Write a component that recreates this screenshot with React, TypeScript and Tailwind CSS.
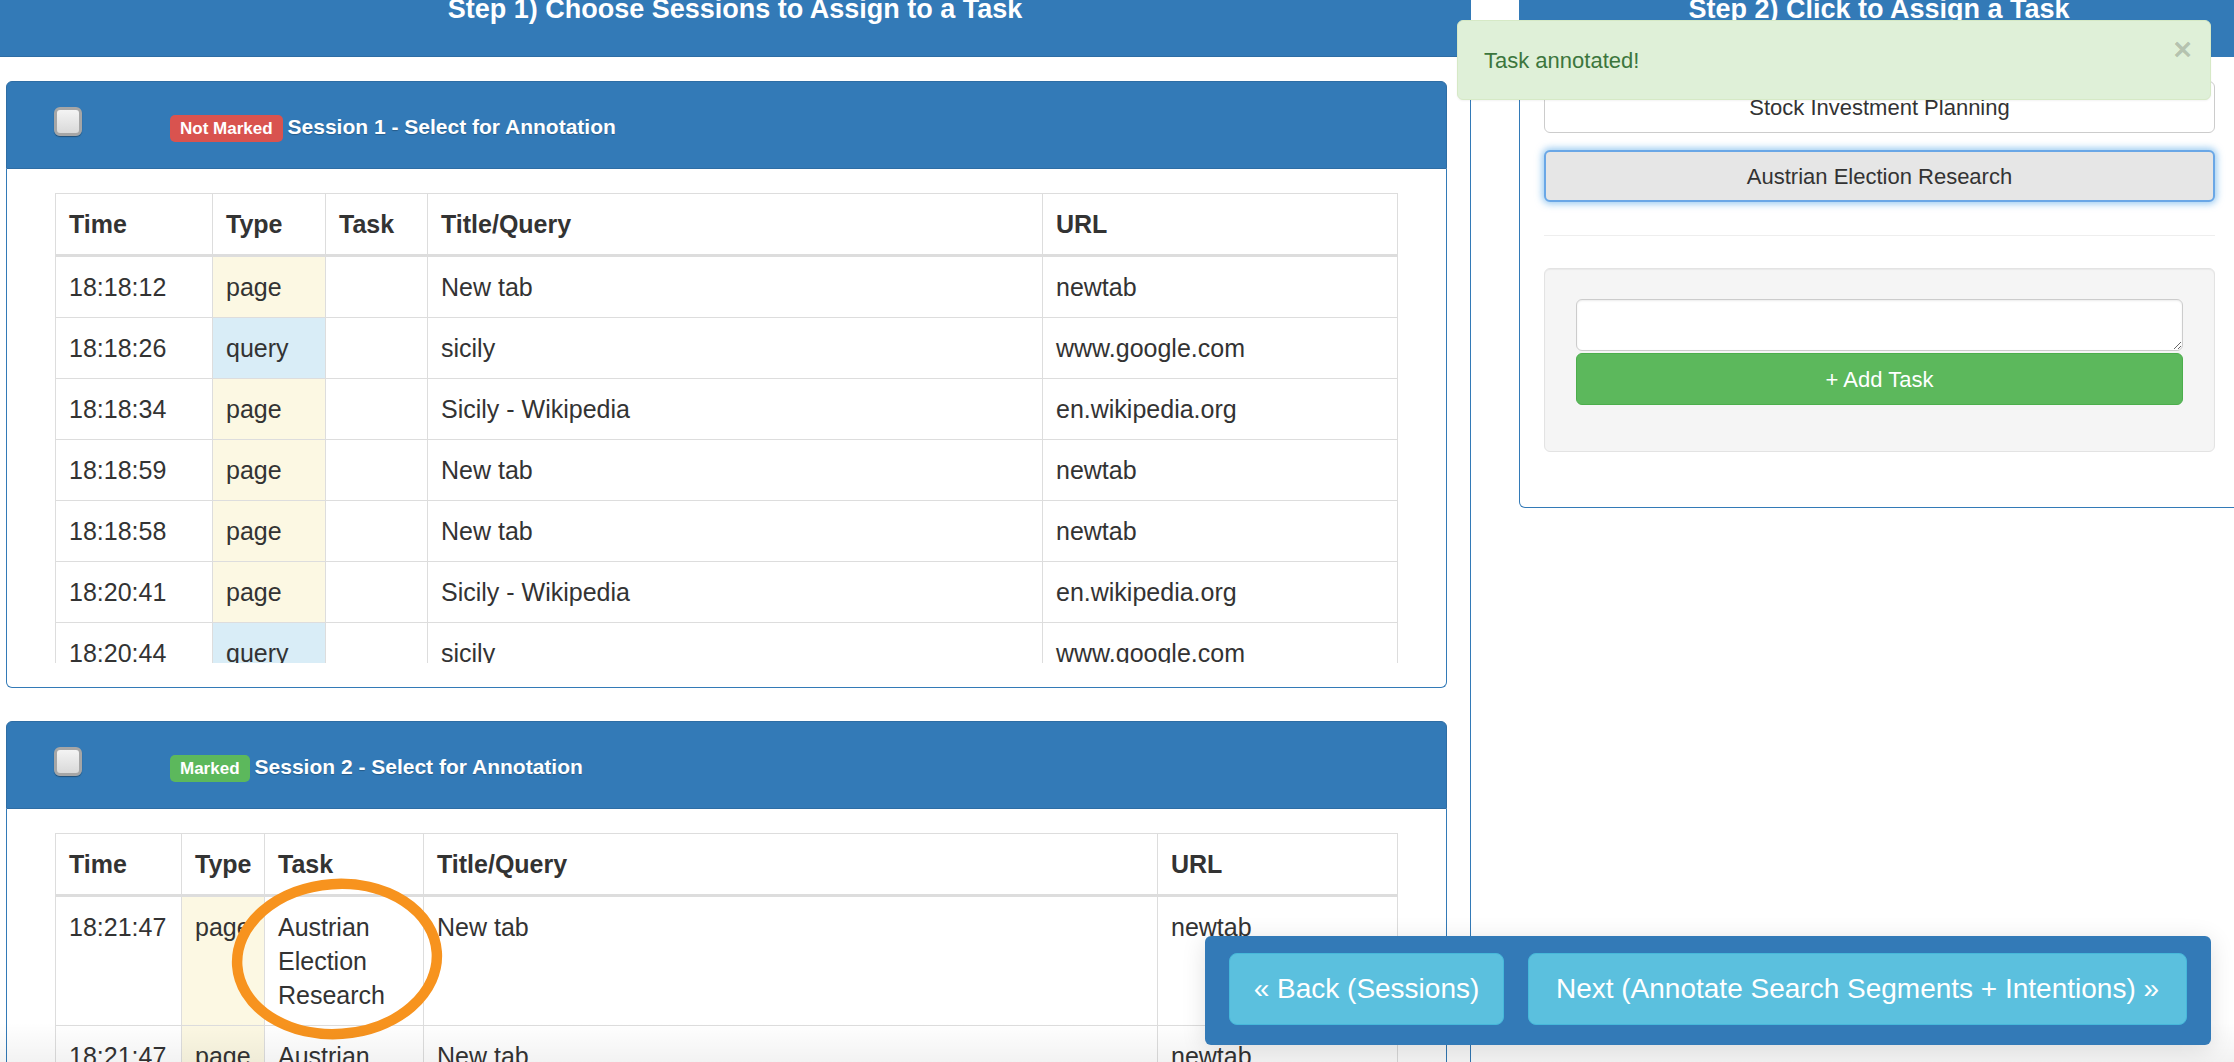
import React from 'react'

type Row = {
  time: string
  type: 'page' | 'query'
  task: string
  title: string
  url: string
}

const session1: Row[] = [
  { time: '18:18:12', type: 'page', task: '', title: 'New tab', url: 'newtab' },
  { time: '18:18:26', type: 'query', task: '', title: 'sicily', url: 'www.google.com' },
  { time: '18:18:34', type: 'page', task: '', title: 'Sicily - Wikipedia', url: 'en.wikipedia.org' },
  { time: '18:18:59', type: 'page', task: '', title: 'New tab', url: 'newtab' },
  { time: '18:18:58', type: 'page', task: '', title: 'New tab', url: 'newtab' },
  { time: '18:20:41', type: 'page', task: '', title: 'Sicily - Wikipedia', url: 'en.wikipedia.org' },
  { time: '18:20:44', type: 'query', task: '', title: 'sicily', url: 'www.google.com' },
  { time: '18:20:52', type: 'page', task: '', title: 'Sicily - Wikipedia', url: 'en.wikipedia.org' },
]

const session2: Row[] = [
  { time: '18:21:47', type: 'page', task: 'Austrian Election Research', title: 'New tab', url: 'newtab' },
  { time: '18:21:47', type: 'page', task: 'Austrian Election Research', title: 'New tab', url: 'newtab' },
]

const font = { fontFamily: '"Liberation Sans", Arial, Helvetica, sans-serif' }

function Checkbox() {
  return (
    <div className="w-[28px] h-[29px] shrink-0 rounded-[6px] border-[3px] border-[#a6a6a6] bg-linear-to-b from-[#f4f4f4] to-[#d9d9d9] shadow-[0_1px_1px_rgba(0,0,0,0.35)]" />
  )
}

function SessionPanel({
  marked,
  title,
  rows,
  cols,
  clip,
}: {
  marked: boolean
  title: string
  rows: Row[]
  cols: string[]
  clip: boolean
}) {
  return (
    <div className="w-[1441px]">
      {/* heading */}
      <div className="h-[88px] flex items-start bg-[#337ab7] border border-[#2e6da4] rounded-t-[6px]">
        <div className="ml-[47px] mt-[25px]">
          <Checkbox />
        </div>
        <div className="ml-[88px] mt-[33px] flex items-center h-[27px]">
          <span
            className={`h-[27px] px-[10px] flex items-center rounded-[5px] text-white font-bold text-[17px] ${
              marked ? 'bg-[#5cb85c]' : 'bg-[#d9534f]'
            }`}
          >
            {marked ? 'Marked' : 'Not Marked'}
          </span>
          <span className="ml-[5px] -mt-[5px] text-white font-bold text-[21px] leading-[27px] [text-shadow:0_1px_1px_rgba(0,0,0,0.25)]">
            {title}
          </span>
        </div>
      </div>

      {/* body */}
      <div className="border-x border-b border-[#337ab7] rounded-b-[6px] px-[48px] pt-[24px] pb-[24px]">
        <div className={clip ? 'h-[470px] overflow-hidden' : ''}>
          <table className="w-full table-fixed border-collapse text-[25px] leading-[34px] text-[#333]">
            <colgroup>
              {cols.map((c, i) => (
                <col key={i} className={c} />
              ))}
            </colgroup>
            <thead>
              <tr>
                {['Time', 'Type', 'Task', 'Title/Query', 'URL'].map((h) => (
                  <th
                    key={h}
                    className="text-left align-bottom font-bold px-[13px] py-[13px] border border-[#ddd] border-b-[3px]"
                  >
                    {h}
                  </th>
                ))}
              </tr>
            </thead>
            <tbody>
              {rows.map((r, i) => (
                <tr key={i}>
                  <td className="align-top px-[13px] py-[13px] border border-[#ddd]">{r.time}</td>
                  <td
                    className={`align-top px-[13px] py-[13px] border border-[#ddd] ${
                      r.type === 'page' ? 'bg-[#fcf8e3]' : 'bg-[#d9edf7]'
                    }`}
                  >
                    {r.type}
                  </td>
                  <td className="align-top px-[13px] py-[13px] border border-[#ddd]">{r.task}</td>
                  <td className="align-top px-[13px] py-[13px] border border-[#ddd]">{r.title}</td>
                  <td className="align-top px-[13px] py-[13px] border border-[#ddd]">{r.url}</td>
                </tr>
              ))}
            </tbody>
          </table>
        </div>
      </div>
    </div>
  )
}

export default function App() {
  return (
    <div className="relative w-[2234px] h-[1062px] overflow-hidden bg-white" style={font}>
      <div className="flex items-start">
        {/* Left column */}
        <div className="w-[1471px] shrink-0 border-r border-[#337ab7] h-[1062px]">
          <div className="h-[57px] bg-[#337ab7] border-b border-[#2e6da4] overflow-hidden text-center">
            <div className="-mt-[6px] text-white font-bold text-[27px] leading-[30px]">
              Step 1) Choose Sessions to Assign to a Task
            </div>
          </div>
          <div className="pl-[6px] pt-[24px] flex flex-col gap-[33px]">
            <SessionPanel
              marked={false}
              title="Session 1 - Select for Annotation"
              rows={session1}
              cols={['w-[157px]', 'w-[113px]', 'w-[102px]', 'w-[615px]', '']}
              clip
            />
            <SessionPanel
              marked
              title="Session 2 - Select for Annotation"
              rows={session2}
              cols={['w-[126px]', 'w-[83px]', 'w-[159px]', 'w-[734px]', '']}
              clip={false}
            />
          </div>
        </div>

        {/* Right column */}
        <div className="ml-[48px] w-[720px] shrink-0 border border-t-0 border-[#337ab7] rounded-b-[6px]">
          <div className="h-[57px] bg-[#337ab7] overflow-hidden text-center">
            <div className="-mt-[6px] text-white font-bold text-[27px] leading-[30px]">
              Step 2) Click to Assign a Task
            </div>
          </div>
          <div className="pl-[24px] pr-[23px] pt-[24px] pb-[55px]">
            <button className="w-full h-[52px] bg-white border border-[#ccc] rounded-[6px] text-[22px] text-[#333]">
              Stock Investment Planning
            </button>
            <button className="mt-[17px] w-full h-[52px] bg-[#e6e6e6] border-2 border-[#6aa7e6] rounded-[6px] text-[22px] text-[#333] shadow-[0_0_7px_2px_rgba(102,175,233,0.65)]">
              Austrian Election Research
            </button>
            <hr className="mt-[33px] mb-[32px] border-0 border-t border-[#eee]" />
            <div className="h-[184px] bg-[#f5f5f5] border border-[#e3e3e3] rounded-[6px] px-[31px] pt-[30px] shadow-[inset_0_1px_1px_rgba(0,0,0,0.05)]">
              <textarea className="block w-full h-[52px] bg-white border border-[#ccc] rounded-[6px] shadow-[inset_0_1px_2px_rgba(0,0,0,0.08)]" />
              <button className="mt-[2px] w-full h-[52px] bg-[#5cb85c] border border-[#4cae4c] rounded-[6px] text-[22px] text-white">
                + Add Task
              </button>
            </div>
          </div>
        </div>
      </div>

      {/* Toast */}
      <div className="absolute left-[1457px] top-[20px] w-[754px] h-[80px] bg-[#dff0d8] border border-[#d6e9c6] rounded-[6px] flex items-center justify-between pl-[26px] pr-[18px] shadow-[0_1px_2px_rgba(0,0,0,0.05)]">
        <span className="text-[#3c763d] text-[22px]">Task annotated!</span>
        <span className="self-start mt-[12px] text-black/20 font-bold text-[32px] leading-[32px]">×</span>
      </div>

      {/* Orange highlight */}
      <svg
        className="absolute left-[227px] top-[873px] pointer-events-none"
        width="220"
        height="172"
        viewBox="0 0 220 172"
      >
        <ellipse
          cx="110"
          cy="86"
          rx="100"
          ry="75"
          fill="none"
          stroke="#f7931e"
          strokeWidth="10.5"
          transform="rotate(-4 110 86)"
        />
      </svg>

      {/* bottom shade */}
      <div className="absolute left-0 right-0 bottom-0 h-[40px] bg-linear-to-b from-transparent to-black/[0.05] pointer-events-none" />

      {/* Footer nav */}
      <div className="absolute left-[1205px] top-[936px] w-[1006px] h-[109px] bg-[#337ab7] rounded-[6px] flex gap-[24px] pl-[24px] pt-[17px] shadow-[0_4px_24px_rgba(0,0,0,0.12)]">
        <button className="w-[275px] h-[72px] bg-[#5bc0de] border border-[#46b8da] rounded-[8px] text-white text-[28px]">
          « Back (Sessions)
        </button>
        <button className="w-[659px] h-[72px] bg-[#5bc0de] border border-[#46b8da] rounded-[8px] text-white text-[28px]">
          Next (Annotate Search Segments + Intentions) »
        </button>
      </div>
    </div>
  )
}
